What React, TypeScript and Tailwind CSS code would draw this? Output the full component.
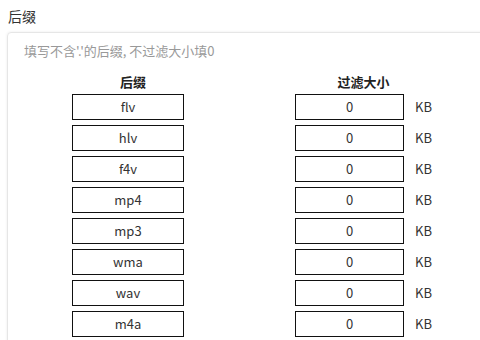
import React from 'react';

const suffixes = ['flv', 'hlv', 'f4v', 'mp4', 'mp3', 'wma', 'wav', 'm4a'];

const App: React.FC = () => {
  return (
    <div
      className="w-[480px] h-[340px] overflow-hidden bg-white text-[#333]"
      style={{ fontFamily: '"Noto Sans CJK SC", "Noto Sans", sans-serif' }}
    >
      <div className="pt-[6px] pl-[8px] text-[14px] leading-5">后缀</div>
      <div className="mt-[6px] ml-[7px] w-[520px] h-[340px] rounded border border-[#e6e6e6] shadow-[0_0_3px_rgba(0,0,0,0.08)] pl-4 pt-2">
        <div className="text-[13px] leading-5 text-[#999]">填写不含'.'的后缀, 不过滤大小填0</div>

        <div className="mt-[11px] pl-[48px] flex gap-[101px]">
          {/* 后缀列 */}
          <div className="w-[122px] flex flex-col">
            <div className="text-center text-[13px] font-bold leading-5 text-[#222]">后缀</div>
            <div className="mt-[2px] flex flex-col gap-[5px]">
              {suffixes.map((s) => (
                <div
                  key={s}
                  className="w-[112px] h-[26px] border border-[#111] flex items-center justify-center text-[13px]"
                >
                  {s}
                </div>
              ))}
            </div>
          </div>

          {/* 过滤大小列 */}
          <div className="w-[137px] flex flex-col">
            <div className="text-center text-[13px] font-bold leading-5 text-[#222]">过滤大小</div>
            <div className="mt-[2px] flex flex-col gap-[5px]">
              {suffixes.map((s) => (
                <div key={s} className="flex items-center">
                  <div className="w-[112px] h-[26px] border border-[#111] flex items-center justify-center text-[13px]">
                    0
                  </div>
                  <span className="ml-[11px] text-[13px]">KB</span>
                </div>
              ))}
            </div>
          </div>
        </div>
      </div>
    </div>
  );
};

export default App;
